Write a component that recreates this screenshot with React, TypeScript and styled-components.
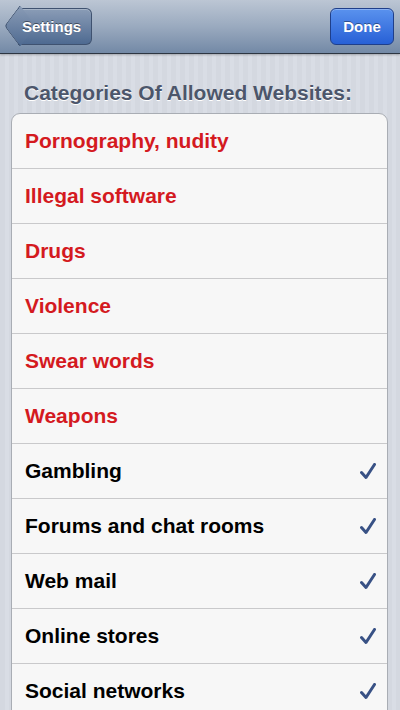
import React from 'react';
import styled, { createGlobalStyle } from 'styled-components';

const GlobalStyle = createGlobalStyle`
    html, body {
        margin: 0;
        padding: 0;
    }
    body {
        font-family: 'Liberation Sans', Arial, sans-serif;
        background: #d5d9e1;
    }
`;

const Screen = styled.div`
    width: 400px;
    height: 710px;
    overflow: hidden;
    background-color: #d6dae2;
    background-image: repeating-linear-gradient(
        90deg,
        #d4d8e0 0px,
        #d4d8e0 5px,
        #d9dde5 5px,
        #d9dde5 9px
    );
`;

const NavBar = styled.div`
    height: 54px;
    box-sizing: border-box;
    display: flex;
    align-items: center;
    justify-content: space-between;
    padding: 0 6px;
    background: linear-gradient(#bcc6d4 0%, #9aaabf 50%, #7389a6 100%);
    border-bottom: 1px solid #2d3642;
    box-shadow: 0 1px 2px rgba(0, 0, 0, 0.25);
`;

const BackButton = styled.div`
    position: relative;
    height: 35px;
    margin-left: 12px;
    padding: 0 10px 0 4px;
    display: flex;
    align-items: center;
    color: #ffffff;
    font-weight: bold;
    font-size: 15px;
    text-shadow: 0 -1px 0 rgba(0, 0, 0, 0.45);
    background: linear-gradient(#8a9cb6, #4e6a91);
    border: 1px solid #3f5270;
    border-left: none;
    border-radius: 0 6px 6px 0;
    box-shadow: inset 0 1px 0 rgba(255, 255, 255, 0.25);

    &::before {
        content: '';
        position: absolute;
        left: -11px;
        top: 4px;
        width: 25px;
        height: 25px;
        transform: rotate(45deg) skew(8deg, 8deg);
        background: linear-gradient(135deg, #8a9cb6, #4e6a91);
        border-left: 1px solid #3f5270;
        border-bottom: 1px solid #3f5270;
        border-radius: 0 0 0 4px;
        z-index: 0;
    }
`;

const ButtonLabel = styled.span`
    position: relative;
    z-index: 1;
`;

const DoneButton = styled.div`
    height: 35px;
    width: 62px;
    display: flex;
    align-items: center;
    justify-content: center;
    color: #ffffff;
    font-weight: bold;
    font-size: 15px;
    text-shadow: 0 -1px 0 rgba(0, 0, 0, 0.4);
    background: linear-gradient(#5a92ee, #2760d6);
    border: 1px solid #1f3f8a;
    border-radius: 6px;
    box-shadow: inset 0 1px 0 rgba(255, 255, 255, 0.3);
`;

const Content = styled.div`
    padding: 26px 12px 0 11px;
`;

const SectionTitle = styled.h2`
    margin: 0 0 8px 13px;
    font-size: 21px;
    font-weight: bold;
    color: #4c566b;
    text-shadow: 0 1px 0 #ffffff;
    line-height: 25px;
    white-space: nowrap;
`;

const Card = styled.div`
    background: #f7f7f7;
    border: 1px solid #a9adb4;
    border-radius: 9px;
    overflow: hidden;
`;

const Row = styled.div<{ $blocked?: boolean }>`
    height: 54px;
    display: flex;
    align-items: center;
    justify-content: space-between;
    padding: 0 11px 0 13px;
    border-top: 1px solid #c9c9cb;
    font-size: 21px;
    font-weight: bold;
    color: ${p => (p.$blocked ? '#d41a1f' : '#000000')};

    &:first-child {
        border-top: none;
    }
`;

const Check = () => (
    <svg width="16" height="17" viewBox="0 0 16 17">
        <path
            d="M1.5 9.5 L6 14.5 L14.5 1.5"
            fill="none"
            stroke="#385185"
            strokeWidth="3"
            strokeLinecap="round"
            strokeLinejoin="round"
        />
    </svg>
);

const categories = [
    { name: 'Pornography, nudity', allowed: false },
    { name: 'Illegal software', allowed: false },
    { name: 'Drugs', allowed: false },
    { name: 'Violence', allowed: false },
    { name: 'Swear words', allowed: false },
    { name: 'Weapons', allowed: false },
    { name: 'Gambling', allowed: true },
    { name: 'Forums and chat rooms', allowed: true },
    { name: 'Web mail', allowed: true },
    { name: 'Online stores', allowed: true },
    { name: 'Social networks', allowed: true },
];

const App: React.FC = () => {
    return (
        <Screen>
            <GlobalStyle />
            <NavBar>
                <BackButton>
                    <ButtonLabel>Settings</ButtonLabel>
                </BackButton>
                <DoneButton>Done</DoneButton>
            </NavBar>
            <Content>
                <SectionTitle>Categories Of Allowed Websites:</SectionTitle>
                <Card>
                    {categories.map(c => (
                        <Row key={c.name} $blocked={!c.allowed}>
                            {c.name}
                            {c.allowed && <Check />}
                        </Row>
                    ))}
                </Card>
            </Content>
        </Screen>
    );
};

export default App;
